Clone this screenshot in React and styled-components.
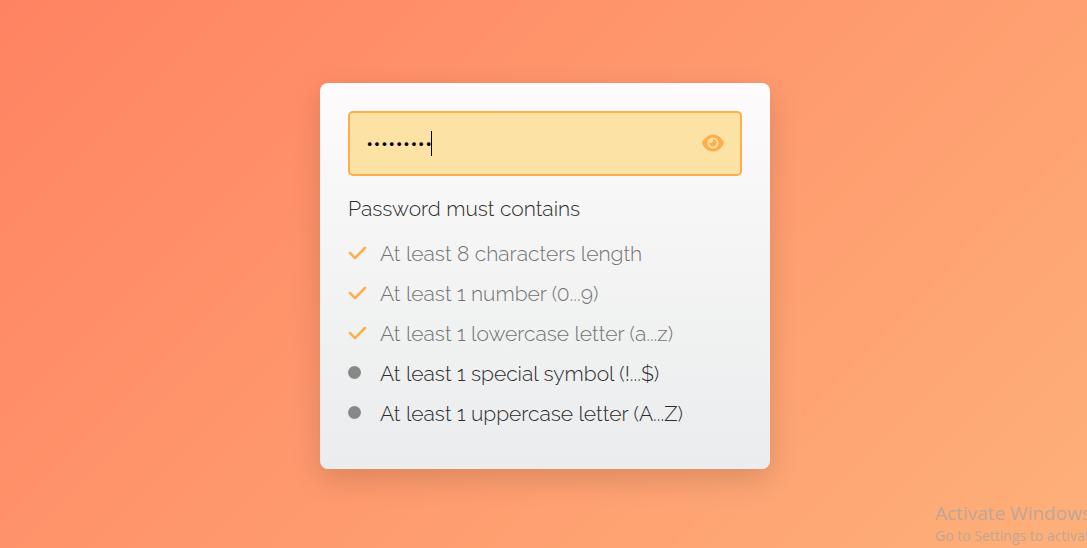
import React, { useState } from "react";
import styled, { createGlobalStyle } from "styled-components";
import { FaCheck, FaCircle, FaEye } from "react-icons/fa6";

const GlobalStyle = createGlobalStyle`
  *, *::before, *::after { box-sizing: border-box; }
  body {
    margin: 0;
    font-family: Raleway, "Open Sans", "Noto Sans", sans-serif;
    font-weight: 300;
  }
`;

const Page = styled.main`
  position: relative;
  display: flex;
  justify-content: center;
  align-items: flex-start;
  min-height: 100vh;
  padding: 83px 16px 32px 19px;
  overflow: hidden;
  background: linear-gradient(135deg, #ff8362 0%, #feb079 100%);
`;

const Card = styled.form`
  width: 100%;
  max-width: 450px;
  padding: 28px 28px 36px;
  border-radius: 8px;
  background: linear-gradient(#fefbfd 0%, #f0f1f1 65%, #ebecee 100%);
  box-shadow: 0 10px 30px rgba(0, 0, 0, 0.14);
`;

const Field = styled.div`
  position: relative;
`;

const PasswordInput = styled.input`
  display: block;
  width: 100%;
  height: 65px;
  padding: 0 56px 0 16px;
  border: 2px solid #ffae4b;
  border-radius: 5px;
  outline: none;
  background: #fde2a6;
  color: #000;
  caret-color: transparent;
  font-family: Raleway, "Open Sans", sans-serif;
  font-size: 21px;
  font-weight: 400;
`;

const Caret = styled.span`
  position: absolute;
  left: 83px;
  top: 20px;
  width: 1px;
  height: 25px;
  background: #000;
`;

const RevealButton = styled.button`
  position: absolute;
  right: 18px;
  top: 21px;
  display: flex;
  padding: 0;
  border: 0;
  background: none;
  color: #ffae4b;
  cursor: pointer;

  svg {
    width: 22px;
    height: 22px;
  }
`;

const Heading = styled.p`
  margin: 16px 0 7px;
  color: #2b2b2b;
  font-size: 21px;
  line-height: 34px;
`;

const Requirements = styled.ul`
  margin: 0;
  padding: 0;
  list-style: none;
`;

const Requirement = styled.li`
  display: flex;
  align-items: center;
  height: 40px;
  color: ${({ $met }) => ($met ? "#727272" : "#2b2b2b")};
  font-size: 21px;
  white-space: nowrap;
`;

const Mark = styled.span`
  display: flex;
  flex: none;
  width: 32px;
  padding-bottom: ${({ $met }) => ($met ? 0 : 2)}px;
  color: ${({ $met }) => ($met ? "#ffae4b" : "#888")};

  svg {
    width: ${({ $met }) => ($met ? 19 : 13)}px;
    height: ${({ $met }) => ($met ? 20 : 13)}px;
  }
`;

const Notice = styled.aside`
  position: absolute;
  left: calc(100% - 152px);
  bottom: 1px;
  color: #c0a695;
  font-family: "Segoe UI", "Open Sans", sans-serif;
  font-weight: 400;
  white-space: nowrap;
`;

const NoticeTitle = styled.div`
  font-size: 19px;
  line-height: 24px;
`;

const NoticeText = styled.div`
  font-size: 14px;
  line-height: 22px;
`;

const rules = [
  { text: "At least 8 characters length", test: /.{8,}/ },
  { text: "At least 1 number (0...9)", test: /[0-9]/ },
  { text: "At least 1 lowercase letter (a...z)", test: /[a-z]/ },
  { text: "At least 1 special symbol (!...$)", test: /[^A-Za-z0-9]/ },
  { text: "At least 1 uppercase letter (A...Z)", test: /[A-Z]/ },
];

export default function App() {
  const [password, setPassword] = useState("abcdef123");
  const [visible, setVisible] = useState(false);

  return (
    <>
      <GlobalStyle />
      <Page>
        <Card onSubmit={(event) => event.preventDefault()}>
          <Field>
            <PasswordInput
              type={visible ? "text" : "password"}
              aria-label="Password"
              value={password}
              onChange={(event) => setPassword(event.target.value)}
            />
            <Caret />
            <RevealButton
              type="button"
              aria-label="Toggle password visibility"
              onClick={() => setVisible(!visible)}
            >
              <FaEye />
            </RevealButton>
          </Field>
          <Heading>Password must contains</Heading>
          <Requirements>
            {rules.map(({ text, test }) => {
              const met = test.test(password);
              return (
                <Requirement key={text} $met={met}>
                  <Mark $met={met}>{met ? <FaCheck /> : <FaCircle />}</Mark>
                  {text}
                </Requirement>
              );
            })}
          </Requirements>
        </Card>
        <Notice>
          <NoticeTitle>Activate Windows</NoticeTitle>
          <NoticeText>Go to Settings to activate Windows.</NoticeText>
        </Notice>
      </Page>
    </>
  );
}
